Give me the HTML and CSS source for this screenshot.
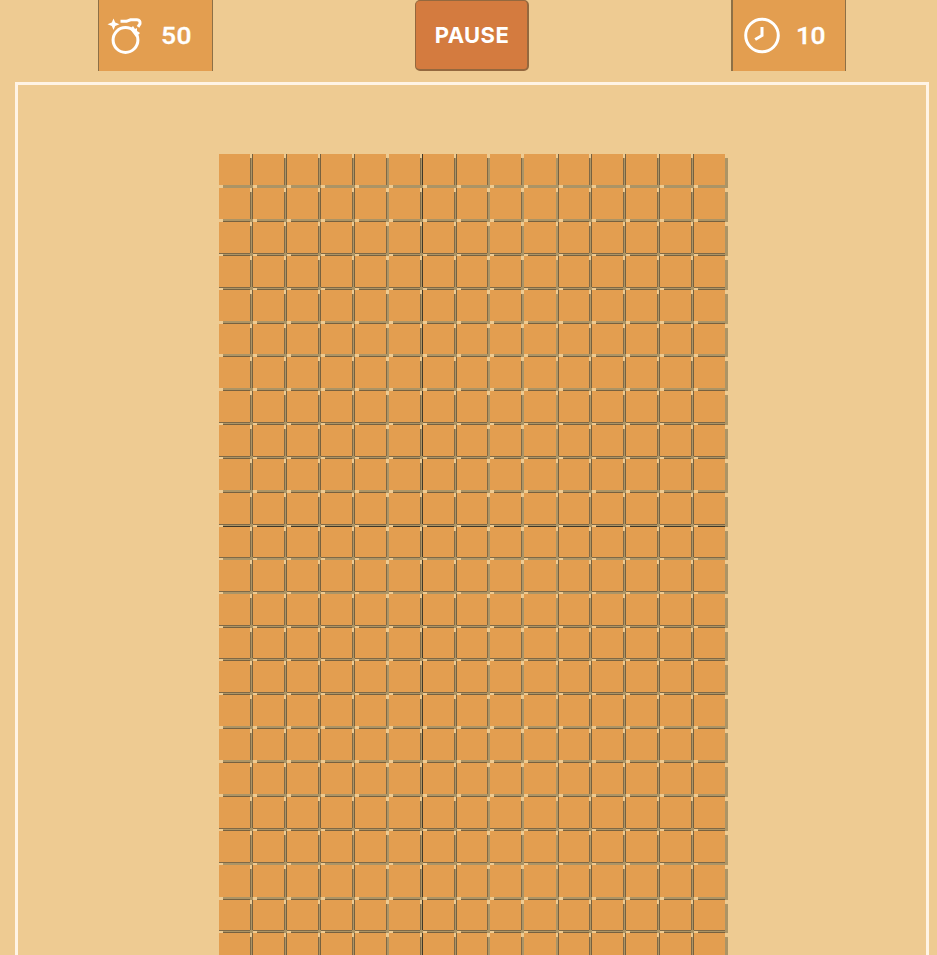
FILE: index.html
```html
<!DOCTYPE html>
<html lang="en">
<head>
<meta charset="utf-8">
<title>Minesweeper</title>
<link rel="stylesheet" href="styles.css">
</head>
<body>
<header class="toolbar">
  <div class="counter">
    <svg class="icon" viewBox="0 0 36 38" aria-hidden="true">
      <circle cx="17.500" cy="23" r="12.400"/>
      <path class="cap" d="M22 12l3-3 2 3 2-1v3l3 2-4 4z"/>
      <path d="M12.500 4.300h6l4-1.500h6.500q3.500 0 3 4l-2 3"/>
      <path class="spark" d="M5.500 1.500l1.700 4.100 4.300 1.700-4.300 1.700-1.700 4.100L3.800 9-.5 7.300l4.300-1.700z"/>
    </svg>
    <span class="value">50</span>
  </div>
  <button class="pause">PAUSE</button>
  <div class="counter timer">
    <svg class="icon" viewBox="0 0 36 38" aria-hidden="true">
      <circle cx="18" cy="18.500" r="16.300"/>
      <path d="M18 10v8.500l-6.800 4"/>
    </svg>
    <span class="value">10</span>
  </div>
</header>
<main class="playfield"><div class="board" id="board"></div></main>
<script src="board.js"></script>
</body>
</html>
```
FILE: styles.css
```css
* { box-sizing: border-box; }
body { margin: 0; height: 955px; overflow: hidden; background: #eecb92; font-family: Inter, sans-serif; color: #fff; }
.toolbar { display: grid; grid-template-columns: 115px 114px 115px; justify-content: space-between; height: 82px; padding: 0 91px 0 98px; align-items: start; }
.counter { display: flex; align-items: center; height: 71px; background: #e39e50; border: solid #8d7046; border-width: 0 1px; padding-left: 9px; }
.timer { border-left-width: 2px; padding-left: 11px; }
.icon { width: 36px; height: 38px; fill: none; stroke: #fff; stroke-width: 3; overflow: visible; }
.spark, .cap { fill: #fff; stroke: none; }
.value { margin-left: 17px; padding-top: 1px; font: 500 24px Roboto, sans-serif; letter-spacing: .5px; -webkit-text-stroke: .3px #fff; transform: scaleX(1.1); transform-origin: left; }
.timer .value { margin-left: 16px; letter-spacing: -.5px; }
.pause { height: 71px; padding: 0 0 0 1px; border: 1px solid #94683e; border-right-width: 2px; border-bottom-width: 2px; border-radius: 5px; background: #d47b3f; color: #fff; font: 700 22px Inter, sans-serif; letter-spacing: .4px; }
.playfield { width: 914px; height: 900px; margin-left: 15px; border: 3px solid #fff4e5; padding: 69px 0 0 201px; }
.board {
  display: grid;
  grid-template-columns: repeat(7, 34px) 33px 34px 35px 33px repeat(4, 34px);
  grid-template-rows: repeat(4, 34px) 34px 33px repeat(5, 34px) 33px 34px 34px 33px repeat(6, 34px) 35px 33px 34px;
}
.cell {
  --right: transparent; --left: transparent; --bottom: transparent; --top: transparent;
  position: relative;
  margin: 0 3px 3px 0;
  background: #e39e50;
  box-shadow: 1px 0 var(--right), -1px 0 var(--left), 0 1px var(--bottom), 0 -1px var(--top), 3.5px 3.5px 0 -.5px #ac9465;
}
.cell::before, .cell::after { content: ""; position: absolute; z-index: 1; background: #eecb92; }
.cell::before { left: 0; bottom: -3px; width: 4px; height: 2px; }
.cell::after { top: 0; right: -2px; width: 2px; height: 4px; }
.edge-right { --right: #806946; }
.edge-left { --left: #77613f; }
.edge-bottom { --bottom: #806946; }
.edge-top { --top: #77613f; }
.seam-left { --left: #403828; }
.seam-top { --top: #403828; }
```
FILE: board.js
```js
// Line pattern of each gap: f = near edge, l = far edge, b = both, s = strong seam, n = plain
const columnGaps = 'bbbbfsbfflbbbbn';
const rowGaps = 'nlbblllbblsffbbblllbflbn';

function edges(before, after, start, end) {
  const names = [];
  if ('fbs'.includes(after)) names.push('edge-' + end);
  if (before && 'lb'.includes(before)) names.push('edge-' + start);
  if (before === 's') names.push('seam-' + start);
  return names;
}

const board = document.getElementById('board');
for (let row = 0; row < 24; row++) {
  for (let col = 0; col < 15; col++) {
    const cell = document.createElement('div');
    cell.classList.add('cell',
      ...edges(columnGaps[col - 1], columnGaps[col], 'left', 'right'),
      ...edges(rowGaps[row - 1], rowGaps[row], 'top', 'bottom'));
    board.append(cell);
  }
}
```
